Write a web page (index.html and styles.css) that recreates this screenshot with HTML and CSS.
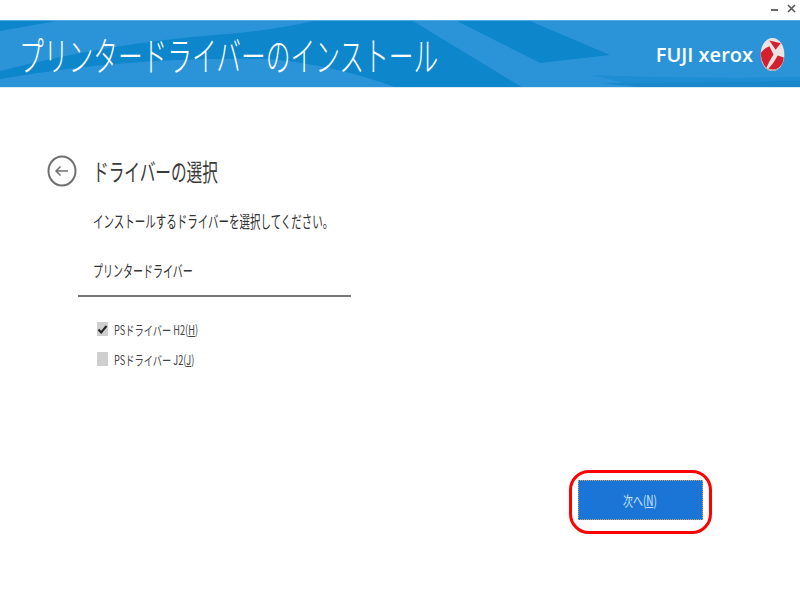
FILE: index.html
```html
<!DOCTYPE html>
<html lang="ja">
<head>
<meta charset="utf-8">
<title>プリンタードライバーのインストール</title>
<link rel="stylesheet" href="styles.css">
</head>
<body>
<div class="titlebar">
  <span class="win-min"></span>
  <svg class="win-close" width="9" height="9" viewBox="0 0 9 9"><path d="M1 1l7 7M8 1L1 8" stroke="#5a5a5a" stroke-width="1.6" fill="none"/></svg>
</div>
<header class="banner">
  <svg class="waves" width="800" height="68" viewBox="0 0 800 68" preserveAspectRatio="none">
    <path d="M0 0H57L0 10Z" fill="#0d86cc"/>
    <path d="M0 50Q110 22 215 14Q270 10 313 0H413L525 68H400Q340 45 270 38Q130 35 0 58Z" fill="#0d86cc"/>
    <path d="M457 0H530L610 34L540 42Z" fill="#0d86cc"/>
    <path d="M590 54Q700 58 800 56V68H640Q620 60 590 54Z" fill="#1f8dd2"/>
    <path d="M600 62Q700 62 800 60V68H660Z" fill="#1a86cc"/>
  </svg>
  <h1 class="banner-title">プリンタードライバーのインストール</h1>
  <div class="logo">
    <span class="logo-text">FUJI xerox</span>
    <svg class="logo-ball" width="25" height="33" viewBox="0 0 24 32">
      <ellipse cx="12" cy="16" rx="11.500" ry="16" fill="#ece4e2"/>
      <path d="M0.500 15Q1 24 6 29Q9 22 13 16L9 8Q3 10 0.500 15Z" fill="#d51f2e"/>
      <path d="M9 2.500L20 5L15 11.500Z" fill="#d51f2e"/>
      <path d="M17 17L23 19Q22 28 15 30.500Q10 31 8 29.500Q13 25 17 17Z" fill="#d51f2e"/>
      <path d="M5 29Q11 33 17 30" fill="none" stroke="#a5a5a5" stroke-width="1.200"/>
    </svg>
  </div>
</header>
<main class="content">
  <div class="heading-row">
    <svg class="back" width="30" height="32" viewBox="0 0 30 32">
      <ellipse cx="15" cy="16" rx="13.500" ry="14.500" fill="none" stroke="#6f6f6f" stroke-width="2"/>
      <path d="M21 16H9M13.500 11.500L9 16l4.500 4.500" fill="none" stroke="#6f6f6f" stroke-width="1.500"/>
    </svg>
    <h2 class="heading"><span class="squeeze">ドライバーの選択</span></h2>
  </div>
  <p class="lead"><span class="squeeze">インストールするドライバーを選択してください。</span></p>
  <div class="section-title"><span class="squeeze">プリンタードライバー</span></div>
  <ul class="options">
    <li class="option">
      <span class="box"><svg width="11" height="11" viewBox="0 0 11 11"><path d="M1.500 5.500L4.200 8.500L9.500 2" fill="none" stroke="#222" stroke-width="2"/></svg></span>
      <span class="squeeze">PSドライバー H2(<u>H</u>)</span>
    </li>
    <li class="option">
      <span class="box"></span>
      <span class="squeeze">PSドライバー J2(<u>J</u>)</span>
    </li>
  </ul>
  <div class="actions">
    <div class="highlight">
      <button class="next" type="button"><span class="squeeze">次へ(<u>N</u>)</span></button>
    </div>
  </div>
</main>
</body>
</html>
```
FILE: styles.css
```css
* { box-sizing: border-box; }
html, body { margin: 0; padding: 0; }
body {
  width: 800px;
  height: 600px;
  overflow: hidden;
  background: #fff;
  font-family: "Noto Sans CJK JP", "Noto Sans", sans-serif;
  color: #333;
}
.titlebar {
  height: 20px;
  display: flex;
  justify-content: flex-end;
  align-items: center;
  gap: 9px;
  padding: 0 4px 4px 0;
}
.win-min { width: 7px; height: 2px; background: #6a6a6a; margin-top: 3px; }
.banner {
  position: relative;
  height: 68px;
  display: flex;
  align-items: center;
  justify-content: space-between;
  overflow: hidden;
  background: #2b94d8;
  border-top: 1px solid #55a9e0;
  border-bottom: 1px solid #d8ecf8;
}
.waves { position: absolute; left: 0; top: 0; }
.banner-title {
  position: relative;
  flex: 1 1 0;
  min-width: 0;
  margin: 0 0 0 19px;
  font-size: 40px;
  line-height: 60px;
  font-weight: 300;
  color: #fff;
  white-space: nowrap;
  transform: scaleX(.618);
  transform-origin: left center;
}
.logo {
  position: relative;
  flex: none;
  display: flex;
  align-items: center;
  gap: 7px;
  margin-right: 15px;
}
.logo-text {
  font-family: "Open Sans", sans-serif;
  font-size: 20px;
  font-weight: 600;
  color: #fff;
  white-space: nowrap;
}
.content {
  padding: 67px 0 0 47px;
}
.squeeze {
  display: inline-block;
  transform: scaleX(.71);
  transform-origin: left center;
  white-space: nowrap;
}
.heading-row { display: flex; align-items: center; gap: 16px; height: 32px; }
.heading { margin: 0; font-size: 24px; font-weight: 400; line-height: 28px; color: #3a3a3a; }
.heading .squeeze { transform: scaleX(.652); }
.lead { margin: 23px 0 0 46px; font-size: 16.500px; line-height: 22px; color: #333; }
.lead .squeeze { transform: scaleX(.636); }
.section-title {
  margin: 27px 0 0 31px;
  width: 273px;
  height: 38px;
  padding: 0 0 0 15px;
  font-size: 16px;
  line-height: 22px;
  border-bottom: 2px solid #777;
}
.section-title .squeeze { transform: scaleX(.624); }
.options { list-style: none; margin: 17px 0 0 50px; padding: 0; }
.option {
  display: flex;
  align-items: center;
  gap: 6px;
  height: 30px;
  font-size: 13px;
  color: #444;
}
.box {
  display: flex;
  align-items: center;
  justify-content: center;
  flex: none;
  width: 11px;
  height: 14px;
  background: #cfcfcf;
}
.actions {
  display: flex;
  justify-content: flex-end;
  margin: 96px 88px 0 0;
}
.highlight {
  border: 3px solid #ff0000;
  border-radius: 20px;
  padding: 7px 6px 11px;
}
.next {
  display: block;
  width: 125px;
  height: 40px;
  padding: 0 0 0 44px;
  text-align: left;
  background: #1a75d6;
  border: 1px dotted #c9a56a;
  color: #cfe4fa;
  font-family: inherit;
  font-size: 14px;
}
```
